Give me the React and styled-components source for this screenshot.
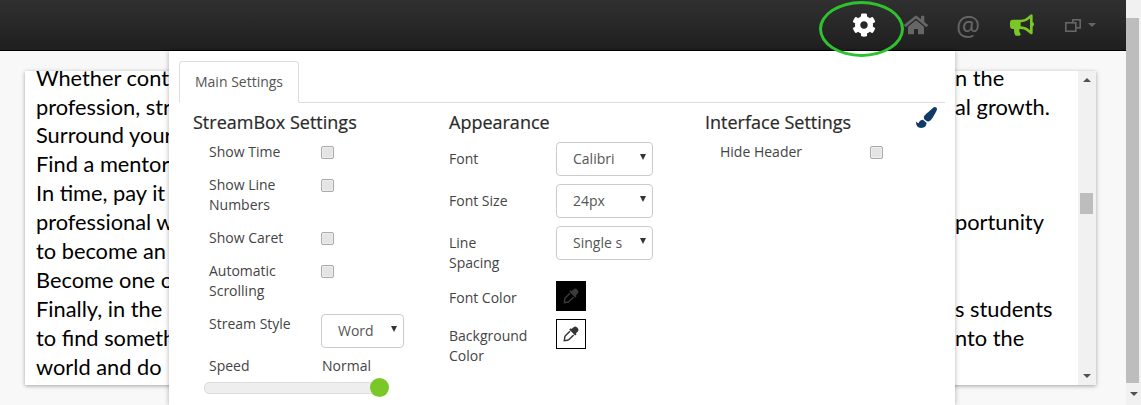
import React from "react";
import styled, { createGlobalStyle } from "styled-components";
import { FaCog, FaHome, FaBullhorn, FaPaintBrush } from "react-icons/fa";

const GlobalStyle = createGlobalStyle`
  html, body {
    margin: 0;
    height: 405px;
    overflow: hidden;
    background: #f8f8f8;
    font-family: "Open Sans", sans-serif;
  }
`;

const Page = styled.div`
  position: relative;
  display: grid;
  grid-template-columns: 1fr 15px;
  width: 1141px;
  height: 405px;
  overflow: hidden;
`;

const Main = styled.div`
  display: flex;
  flex-direction: column;
  min-width: 0;
`;

const Navbar = styled.header`
  height: 50px;
  padding-right: 16px;
  border-bottom: 1px solid #000;
  background: linear-gradient(#303030, #1f1f1f);
  display: flex;
  align-items: center;
  justify-content: flex-end;
  flex: none;
`;

const NavIcon = styled.div`
  width: ${(p) => p.$w || 52}px;
  box-sizing: border-box;
  padding-left: ${(p) => p.$nudge || 0}px;
  display: flex;
  justify-content: center;
  align-items: center;
  gap: 7px;
  color: ${(p) => p.$color || "#666"};
  font-size: ${(p) => p.$size || 24}px;
`;

const AtSign = styled.span`
  font-size: 27px;
  line-height: 1;
  color: #666;
`;

const Caret = styled.span`
  width: 0;
  height: 0;
  border-left: 4px solid transparent;
  border-right: 4px solid transparent;
  border-top: 4px solid #666;
`;

const Highlight = styled.div`
  position: absolute;
  left: 819px;
  top: 1px;
  width: 85px;
  height: 56px;
  box-sizing: border-box;
  border: 3px solid #2fc22f;
  border-radius: 50%;
`;

const Content = styled.main`
  flex: 1;
  padding: 20px 30px 20px 25px;
  min-height: 0;
`;

const EditorCard = styled.div`
  height: 314px;
  background: #fff;
  box-shadow: 0 1px 4px rgba(0, 0, 0, 0.35);
  display: grid;
  grid-template-columns: 1fr 18px;
  overflow: hidden;
`;

const EditorText = styled.div`
  padding: 0 0 0 11px;
  color: #000;
  font-family: Lato, sans-serif;
  font-size: 21.8px;
  line-height: 28.9px;
  margin-top: -7.4px;
  min-width: 0;
`;

const TextLine = styled.div`
  display: grid;
  grid-template-columns: 919px 1fr;
  white-space: nowrap;
`;

const LeftText = styled.span`
  overflow: hidden;
`;

const InnerScrollbar = styled.div`
  background: #f1f1f1;
  display: flex;
  flex-direction: column;
  align-items: center;
  justify-content: space-between;
  padding: 7px 0;
  position: relative;
`;

const ArrowUp = styled.span`
  width: 0;
  height: 0;
  border-left: 4px solid transparent;
  border-right: 4px solid transparent;
  border-bottom: 4px solid #505050;
`;

const ArrowDown = styled.span`
  width: 0;
  height: 0;
  border-left: 4px solid transparent;
  border-right: 4px solid transparent;
  border-top: 4px solid #505050;
`;

const InnerThumb = styled.div`
  position: absolute;
  left: 2px;
  top: 122px;
  width: 13px;
  height: 21px;
  background: #bdbdbd;
`;

const PageScrollbar = styled.div`
  background: #f1f1f1;
  display: flex;
  flex-direction: column;
  align-items: center;
`;

const PageThumb = styled.div`
  align-self: flex-start;
  width: 13px;
  flex: 1;
  margin-top: 18px;
  background: #bdbdbd;
`;

const PageArrow = styled.div`
  height: 22px;
  display: flex;
  align-items: center;
  justify-content: center;
`;

const Popup = styled.section`
  position: absolute;
  left: 169px;
  top: 51px;
  width: 786px;
  height: 354px;
  box-sizing: border-box;
  background: #fff;
  box-shadow: 0 0 5px rgba(0, 0, 0, 0.3);
  padding: 10px 10px 0;
  color: #444;
  font-size: 14px;
  line-height: 20px;
`;

const TabBar = styled.div`
  height: 41px;
  border-bottom: 1px solid #ddd;
  display: flex;
`;

const Tab = styled.div`
  height: 42px;
  padding: 0 15px;
  box-sizing: border-box;
  background: #fff;
  border: 1px solid #ddd;
  border-bottom: 1px solid #fff;
  border-radius: 4px 4px 0 0;
  display: flex;
  align-items: center;
  font-size: 14px;
  color: #555;
`;

const Columns = styled.div`
  display: grid;
  grid-template-columns: 256px 256px 1fr;
  padding: 7px 0 0 14px;
  position: relative;
`;

const Column = styled.div`
  display: flex;
  flex-direction: column;
`;

const Heading = styled.h3`
  margin: 0 0 8px;
  font-size: 18px;
  font-weight: 500;
  line-height: 24px;
  color: #2a2a2a;
  -webkit-text-stroke: 0.2px #2a2a2a;
`;

const Row = styled.div`
  display: grid;
  grid-template-columns: ${(p) => p.$label || 112}px auto;
  justify-items: start;
  margin-bottom: ${(p) => p.$gap ?? 13}px;
  padding-left: ${(p) => p.$indent ?? 16}px;
`;

const Label = styled.label`
  display: block;
  padding-right: 20px;
`;

const FieldRow = styled.div`
  display: grid;
  grid-template-columns: 107px auto;
  margin-bottom: 8px;
`;

const FieldLabel = styled.label`
  display: block;
  padding: 7px 28px 0 0;
`;

const Check = styled.span`
  width: 11px;
  height: 11px;
  margin-top: 4px;
  border: 1px solid #aaa;
  border-radius: 2px;
  background: #e4e4e4;
  box-shadow: inset 0 0 0 1px #eee;
`;

const SelectBox = styled.div`
  width: ${(p) => p.$w || 97}px;
  height: 34px;
  box-sizing: border-box;
  border: 1px solid #ccc;
  border-radius: 4px;
  padding: 0 6px 0 16px;
  display: flex;
  align-items: center;
  justify-content: space-between;
  color: #555;
  overflow: hidden;
  white-space: nowrap;
`;

const SelectCaret = styled.span`
  width: 0;
  height: 0;
  margin-bottom: 4px;
  flex: none;
  border-left: 3px solid transparent;
  border-right: 3px solid transparent;
  border-top: 6px solid #333;
`;

const Swatch = styled.div`
  width: 30px;
  height: 30px;
  box-sizing: border-box;
  background: ${(p) => (p.$dark ? "#000" : "#fff")};
  border: 1px solid #000;
  color: ${(p) => (p.$dark ? "#3a3a3a" : "#333")};
  display: flex;
  align-items: center;
  justify-content: center;
`;

const SliderLabels = styled.div`
  display: grid;
  grid-template-columns: 113px auto;
  padding-left: 16px;
`;

const SliderTrack = styled.div`
  position: relative;
  width: 181px;
  height: 10px;
  margin: 6px 0 0 11px;
  background: #eee;
  border: 1px solid #ddd;
  border-radius: 5px;
`;

const SliderHandle = styled.span`
  position: absolute;
  right: -3px;
  top: -5px;
  width: 19px;
  height: 19px;
  border-radius: 50%;
  background: #7ac728;
`;

const BrushIcon = styled.div`
  position: absolute;
  right: 8px;
  top: 4px;
  color: #123a66;
  font-size: 21px;
  line-height: 1;
`;

// two overlapping windows, navbar
const WindowsIcon = () => (
  <svg width="16" height="13" viewBox="0 0 16 13" fill="none" stroke="currentColor" strokeWidth="1.6">
    <rect x="7.8" y="0.8" width="7.4" height="8" />
    <rect x="0.8" y="3.8" width="10" height="8.4" fill="#262626" />
  </svg>
);

// eyedropper with a hollow tube, colour swatches
const DropperIcon = () => (
  <svg width="16" height="16" viewBox="0 0 16 16">
    <path
      fill="currentColor"
      d="M10.6 1.2c.9-.9 2.3-.9 3.2 0l1 1c.9.9.9 2.3 0 3.2l-2 2 .8.8-1.4 1.4-6-6 1.4-1.4.8.8z"
    />
    <path
      fill="none"
      stroke="currentColor"
      strokeWidth="1.4"
      d="M7 5.2 2.6 9.6c-.6.6-.8 1.2-.9 2L1.3 14.6l3-.4c.8-.1 1.4-.3 2-.9l4.4-4.4"
    />
  </svg>
);

const lines = [
  ["Whether contemplating a career in", "n the"],
  ["profession, strive to be the best", "al growth."],
  ["Surround yourself with people", ""],
  ["Find a mentor who will help", ""],
  ["In time, pay it forward to another", ""],
  ["professional who might need it", "portunity"],
  ["to become an example for others", ""],
  ["Become one of them in your field", ""],
  ["Finally, in the", "s students"],
  ["to find something they really love", "nto the"],
  ["world and do", ""],
];

export default function App() {
  return (
    <Page>
      <GlobalStyle />
      <Main>
        <Navbar>
          <NavIcon $color="#fff"><FaCog /></NavIcon>
          <NavIcon><FaHome /></NavIcon>
          <NavIcon><AtSign>@</AtSign></NavIcon>
          <NavIcon $color="#7ac728" $nudge={4}><FaBullhorn /></NavIcon>
          <NavIcon $w={64} $nudge={4}><WindowsIcon /><Caret /></NavIcon>
        </Navbar>
        <Content>
          <EditorCard>
            <EditorText>
              {lines.map(([left, right]) => (
                <TextLine key={left}>
                  <LeftText>{left}</LeftText>
                  <span>{right}</span>
                </TextLine>
              ))}
            </EditorText>
            <InnerScrollbar>
              <ArrowUp />
              <InnerThumb />
              <ArrowDown />
            </InnerScrollbar>
          </EditorCard>
        </Content>
      </Main>
      <PageScrollbar>
        <PageThumb />
        <PageArrow><ArrowDown /></PageArrow>
      </PageScrollbar>

      <Popup>
        <TabBar><Tab>Main Settings</Tab></TabBar>
        <Columns>
          <BrushIcon><FaPaintBrush /></BrushIcon>
          <Column>
            <Heading>StreamBox Settings</Heading>
            <Row><Label>Show Time</Label><Check /></Row>
            <Row><Label>Show Line Numbers</Label><Check /></Row>
            <Row><Label>Show Caret</Label><Check /></Row>
            <Row><Label>Automatic Scrolling</Label><Check /></Row>
            <Row $gap={8}><Label>Stream Style</Label><SelectBox $w={83}>Word<SelectCaret /></SelectBox></Row>
            <SliderLabels><span>Speed</span><span>Normal</span></SliderLabels>
            <SliderTrack><SliderHandle /></SliderTrack>
          </Column>
          <Column>
            <Heading>Appearance</Heading>
            <FieldRow><FieldLabel>Font</FieldLabel><SelectBox>Calibri<SelectCaret /></SelectBox></FieldRow>
            <FieldRow><FieldLabel>Font Size</FieldLabel><SelectBox>24px<SelectCaret /></SelectBox></FieldRow>
            <FieldRow><FieldLabel>Line Spacing</FieldLabel><SelectBox>Single s<SelectCaret /></SelectBox></FieldRow>
            <FieldRow><FieldLabel>Font Color</FieldLabel><Swatch $dark><DropperIcon /></Swatch></FieldRow>
            <FieldRow><FieldLabel>Background Color</FieldLabel><Swatch><DropperIcon /></Swatch></FieldRow>
          </Column>
          <Column>
            <Heading>Interface Settings</Heading>
            <Row $label={150} $indent={15}><Label>Hide Header</Label><Check /></Row>
          </Column>
        </Columns>
      </Popup>

      <Highlight />
    </Page>
  );
}
